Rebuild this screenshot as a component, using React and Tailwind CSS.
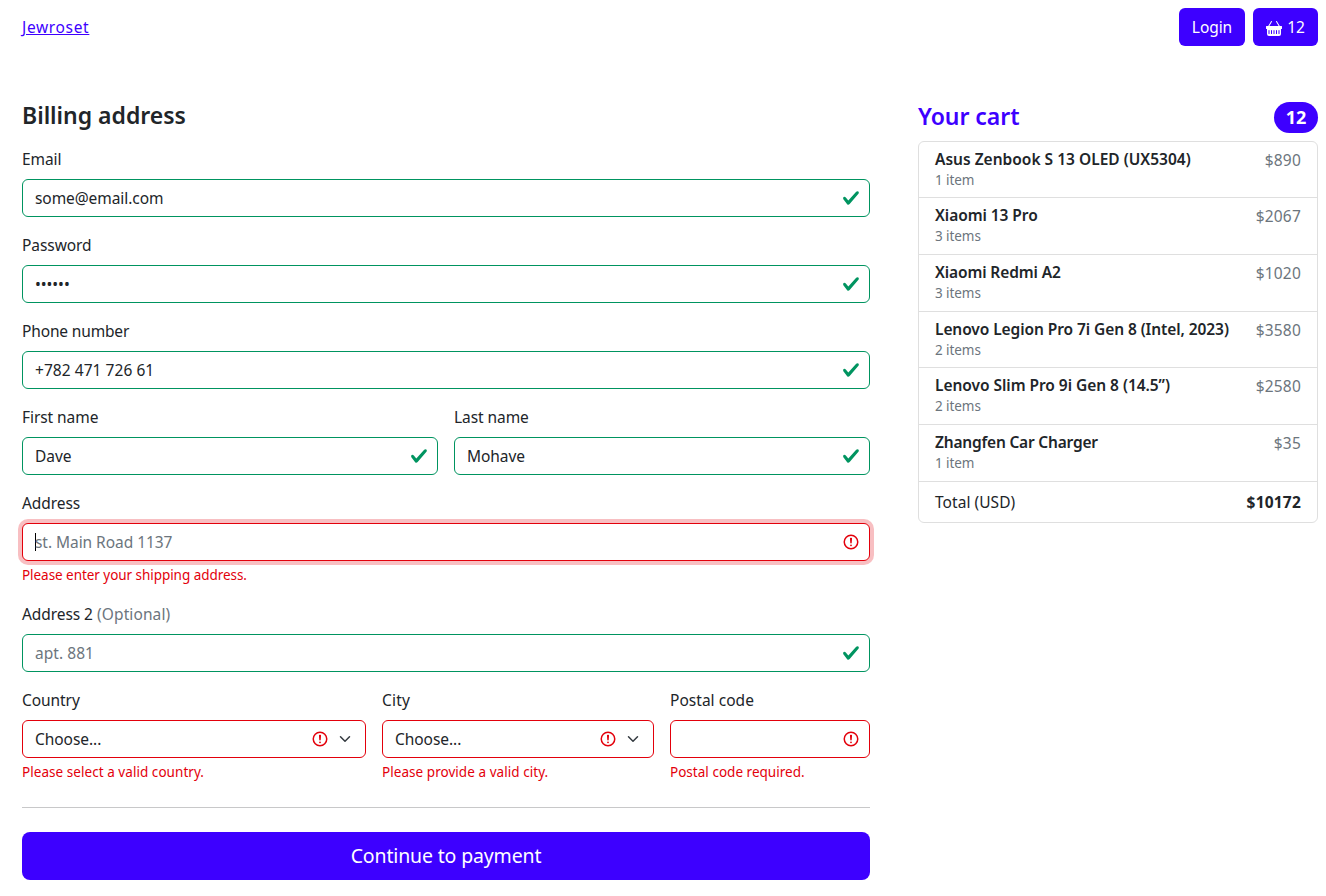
import { BsBasketFill } from "react-icons/bs";

const products = [
  { name: "Asus Zenbook S 13 OLED (UX5304)", track: "tracking-[0.01px]", count: "1 item", price: "$890" },
  { name: "Xiaomi 13 Pro", track: "tracking-[-0.06px]", count: "3 items", price: "$2067" },
  { name: "Xiaomi Redmi A2", track: "tracking-[-0.12px]", count: "3 items", price: "$1020" },
  { name: "Lenovo Legion Pro 7i Gen 8 (Intel, 2023)", track: "tracking-[-0.08px]", count: "2 items", price: "$3580" },
  { name: "Lenovo Slim Pro 9i Gen 8 (14.5”)", track: "tracking-[-0.04px]", count: "2 items", price: "$2580" },
  { name: "Zhangfen Car Charger", track: "tracking-[-0.2px]", count: "1 item", price: "$35" },
];

function ValidIcon() {
  return (
    <svg viewBox="0 0 8 8" className="size-[18px] shrink-0" fill="#009460">
      <path d="M2.3 6.73.6 4.53c-.4-1.04.46-1.4 1.1-.8l1.1 1.4 3.4-3.8c.6-.63 1.6-.27 1.2.7l-4 4.6c-.43.5-.8.4-1.1.1z" />
    </svg>
  );
}

function InvalidIcon() {
  return (
    <svg viewBox="0 0 12 12" className="size-[18px] shrink-0" fill="none" stroke="#e3000b">
      <circle cx="6" cy="6" r="4.5" />
      <path strokeLinejoin="round" d="M5.8 3.6h.4L6 6.5z" />
      <circle cx="6" cy="8.2" r=".6" fill="#e3000b" stroke="none" />
    </svg>
  );
}

function Chevron() {
  return (
    <svg viewBox="0 0 16 16" className="mr-[3px] ml-2 h-3 w-4 shrink-0" fill="none" stroke="#343a40" strokeWidth="2" strokeLinecap="round" strokeLinejoin="round">
      <path d="m2 5 6 6 6-6" />
    </svg>
  );
}

function Field({
  label,
  note,
  value,
  placeholder,
  error,
  invalid,
  focused,
  select,
  labelTrack = "tracking-[-0.07px]",
  track = "tracking-[-0.05px]",
  errorTrack = "tracking-[0.05px]",
}) {
  const border = invalid ? "border-[#e3000b]" : "border-[#009460]";
  const ring = focused ? "ring-4 ring-[#e3000b]/25" : "";
  return (
    <div>
      <div className={`mb-2 h-6 ${labelTrack}`}>
        {label}
        {note && <span className="tracking-[0.1px] text-[#6c757d]"> {note}</span>}
      </div>
      <div className={`flex h-[38px] items-center rounded-md border bg-white pr-[9px] pl-3 ${border} ${ring}`}>
        {focused && <span className="-mr-px h-[18px] w-px bg-black" />}
        <span className={`flex-1 whitespace-pre ${track} ${placeholder ? "text-[#6c757d]" : ""}`}>{placeholder || value}</span>
        {invalid ? <InvalidIcon /> : <ValidIcon />}
        {select && <Chevron />}
      </div>
      {error && <div className={`mt-1 h-[21px] text-[13.5px] leading-[21px] text-[#e3000b] ${errorTrack}`}>{error}</div>}
    </div>
  );
}

export default function App() {
  return (
    <div className="h-[896px] overflow-hidden bg-white pr-2 pl-[22px] font-['Noto_Sans','Open_Sans',sans-serif] text-[15.5px] leading-6 tracking-[-0.07px] text-[#212529]">
      <header className="flex h-[54px] items-center justify-between">
        <a className="tracking-[0.66px] text-[#3d00ff] underline" href="#">Jewroset</a>
        <div className="flex gap-2 text-white">
          <button className="h-[38px] w-[66px] rounded-md bg-[#3d00ff]">Login</button>
          <button className="flex h-[38px] w-[65px] items-center justify-center gap-[5px] rounded-md bg-[#3d00ff]">
            <BsBasketFill className="mt-0.5 size-4" />
            12
          </button>
        </div>
      </header>

      <main className="flex gap-12 pt-12">
        <form className="w-[848px]">
          <h1 className="mb-4 h-[29px] text-[23px] leading-[26px] font-semibold tracking-[-0.02px]">Billing address</h1>
          <div className="flex flex-col gap-4">
            <Field label="Email" value="some@email.com" track="tracking-[-0.07px]" />
            <Field label="Password" value="••••••" />
            <Field label="Phone number" labelTrack="tracking-[-0.15px]" value="+782 471 726 61" track="tracking-[0.05px]" />
            <div className="grid grid-cols-2 gap-4">
              <Field label="First name" value="Dave" />
              <Field label="Last name" value="Mohave" />
            </div>
            <Field
              label="Address"
              placeholder="st. Main Road 1137"
              error="Please enter your shipping address."
              errorTrack="tracking-[-0.05px]"
              invalid
              focused
            />
            <Field label="Address 2" note="(Optional)" placeholder="apt. 881" track="tracking-[0.05px]" />
            <div className="grid grid-cols-[344px_272px_200px] gap-4">
              <Field label="Country" value="Choose..." error="Please select a valid country." invalid select />
              <Field label="City" labelTrack="tracking-[0.2px]" value="Choose..." error="Please provide a valid city." invalid select />
              <Field label="Postal code" labelTrack="tracking-[0.03px]" value="" error="Postal code required." errorTrack="tracking-[0.02px]" invalid />
            </div>
          </div>
          <hr className="my-6 border-[#c8c8c9]" />
          <button className="h-12 w-full rounded-lg bg-[#3d00ff] text-[19.5px] tracking-[-0.15px] text-white">Continue to payment</button>
        </form>

        <aside className="w-[400px]">
          <div className="mb-[7.8px] flex h-[31px] items-center justify-between">
            <h2 className="-mt-1 text-[23px] font-semibold tracking-[-0.05px] text-[#3d00ff]">Your cart</h2>
            <span className="flex h-[31px] w-11 items-center justify-center rounded-full bg-[#3d00ff] text-[18px] leading-[29px] font-bold text-white">12</span>
          </div>
          <ul className="h-[382px] rounded-md border border-[#dfdfdf]">
            {products.map((p) => (
              <li key={p.name} className="flex h-[56.65px] justify-between border-b border-[#dfdfdf] px-4 pt-[7px]">
                <div>
                  <h3 className={`h-[21px] leading-[21px] font-semibold whitespace-nowrap ${p.track}`}>{p.name}</h3>
                  <div className="text-[13.5px] leading-[21px] text-[#6c757d]">{p.count}</div>
                </div>
                <span className="leading-[23px] tracking-[0.2px] text-[#6c757d]">{p.price}</span>
              </li>
            ))}
            <li className="flex h-10 items-center justify-between px-4">
              <span className="tracking-[0.05px]">Total (USD)</span>
              <strong className="font-bold tracking-[0.2px]">$10172</strong>
            </li>
          </ul>
        </aside>
      </main>
    </div>
  );
}
